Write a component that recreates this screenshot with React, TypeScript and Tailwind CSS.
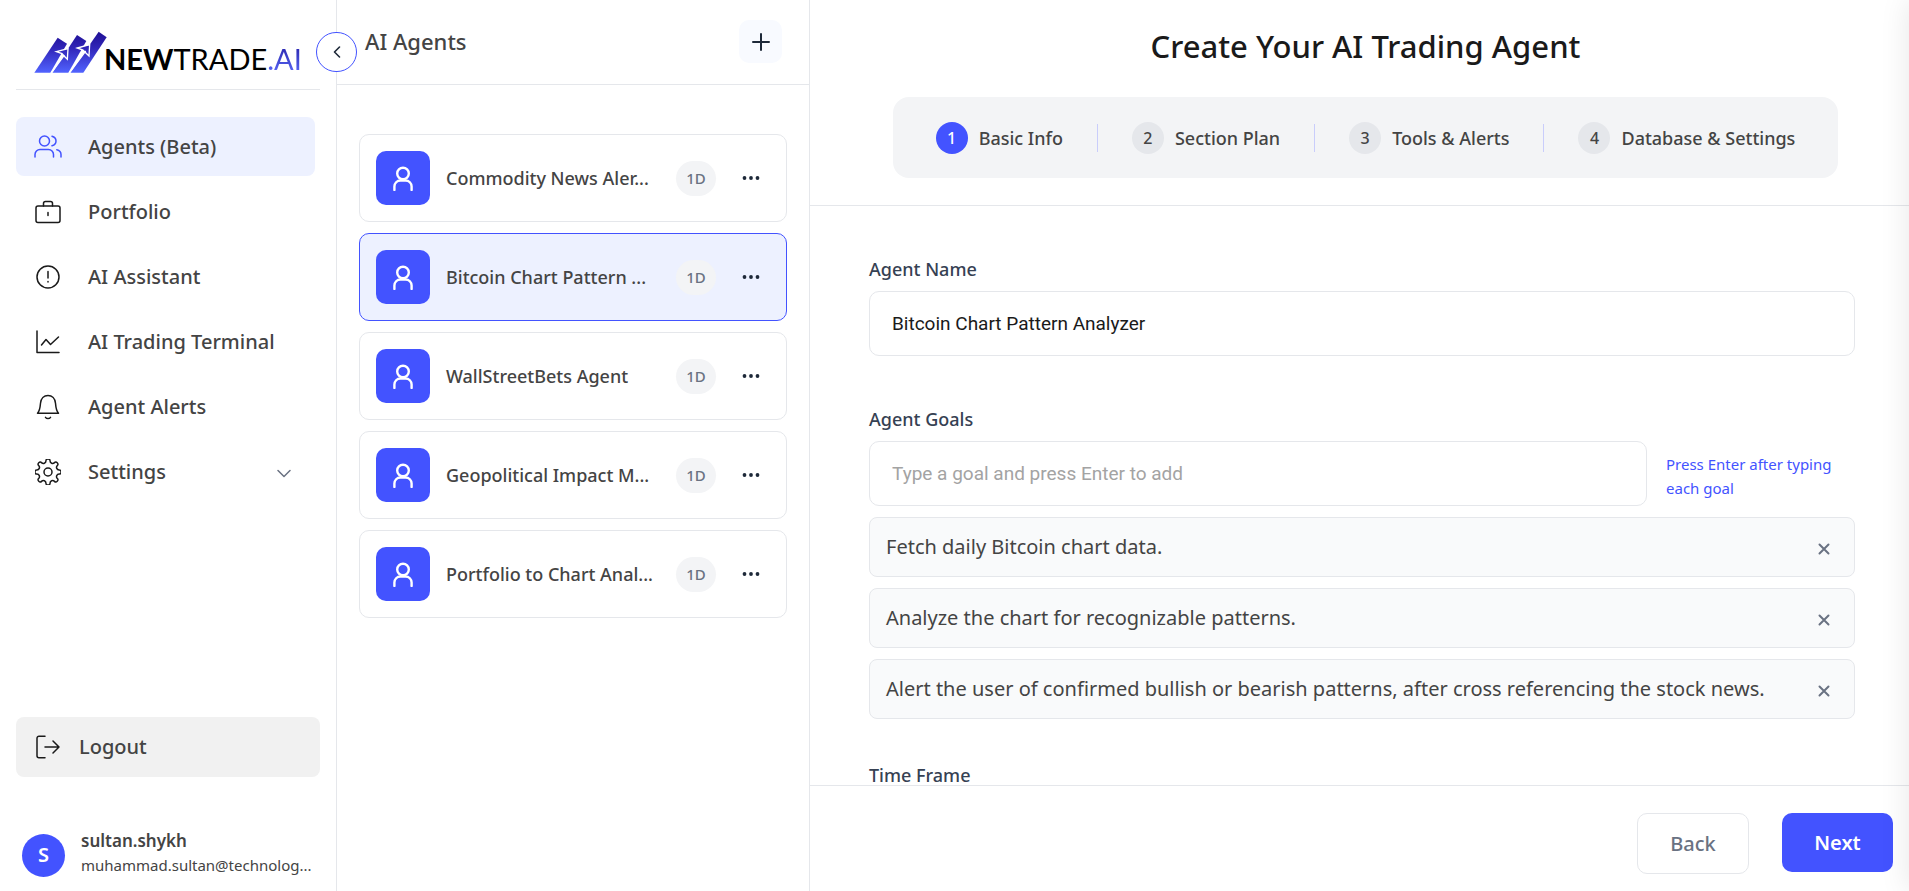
import { useState } from "react";
import type { ReactNode } from "react";

const TEETH = 8;

/** Smooth closed outline of a round-toothed gear centred on (13, 13). */
function gearPath(): string {
  const points: [number, number][] = [];
  for (let i = 0; i < TEETH; i++) {
    const base = (i * 360) / TEETH - 90;
    const corners: [number, number][] = [
      [13.2, -9],
      [13.2, 9],
      [9.6, 12],
      [9.6, 33],
    ];
    for (const [r, a] of corners) {
      const t = ((base + a) * Math.PI) / 180;
      points.push([13 + r * Math.cos(t), 13 + r * Math.sin(t)]);
    }
  }
  const mid = (a: [number, number], b: [number, number]) =>
    `${((a[0] + b[0]) / 2).toFixed(2)} ${((a[1] + b[1]) / 2).toFixed(2)}`;
  let d = `M${mid(points[points.length - 1], points[0])}`;
  points.forEach((p, i) => {
    d += `Q${p[0].toFixed(2)} ${p[1].toFixed(2)} ${mid(p, points[(i + 1) % points.length])}`;
  });
  return `${d}Z`;
}

function Icon({ w, h, className, children }: { w: number; h: number; className?: string; children: ReactNode }) {
  return (
    <svg
      width={w}
      height={h}
      viewBox={`0 0 ${w} ${h}`}
      fill="none"
      stroke="currentColor"
      strokeWidth="1.5"
      strokeLinecap="round"
      strokeLinejoin="round"
      className={className}
      aria-hidden="true"
    >
      {children}
    </svg>
  );
}

const UsersIcon = () => (
  <Icon w={28} h={23}>
    <circle cx="10.5" cy="6" r="5" />
    <path d="M18 1.2c2.4.7 4 2.4 4 4.8s-1.600 4.100-4 4.800M1 22v-2.500a5 5 0 0 1 5-5h8.500a5 5 0 0 1 5 5V22M22.800 14.700c2.600.6 4.200 2.300 4.200 4.800V22" />
  </Icon>
);
const BriefcaseIcon = () => (
  <Icon w={26} h={24}>
    <rect x="1" y="6" width="24" height="16.500" rx="2" />
    <path d="M8.500 6V3.500a2 2 0 0 1 2-2h5a2 2 0 0 1 2 2V6M13 12.500v3" />
  </Icon>
);
const AlertIcon = () => (
  <Icon w={24} h={24}>
    <circle cx="12" cy="12" r="11" />
    <path d="M12 6.500v6.500M12 16.500v.5" />
  </Icon>
);
const ChartIcon = () => (
  <Icon w={24} h={24}>
    <path d="M1 1v21.500h22M5.500 15l4.500-5.500 4.500 5L22.500 7" />
  </Icon>
);
const BellIcon = () => (
  <Icon w={24} h={26}>
    <path d="M1.500 19.300c2-2 2.600-5 3-10C4.900 4.500 8 1.500 12 1.500s7.100 3 7.500 7.800c.4 5 1 8 3 10zM9.500 23.300c.6.900 1.400 1.300 2.500 1.300s1.900-.4 2.500-1.300" />
  </Icon>
);
const GearIcon = () => (
  <Icon w={26} h={26}>
    <path d={gearPath()} />
    <circle cx="13" cy="13" r="4" />
  </Icon>
);
const LogoutIcon = () => (
  <Icon w={24} h={24}>
    <path d="M9 1.200H3a2 2 0 0 0-2 2v17.600a2 2 0 0 0 2 2h6M9 12h14M17 6l6 6-6 6" />
  </Icon>
);

const LogoMark = () => (
  <svg width="75" height="43" viewBox="8 5 225 129" className="shrink-0" aria-hidden="true">
    <defs>
      <linearGradient id="bars" x1="0" y1="10" x2="0" y2="133" gradientUnits="userSpaceOnUse">
        <stop offset="0" stopColor="#1f0f94" />
        <stop offset="0.400" stopColor="#3125b8" />
        <stop offset="1" stopColor="#5163ff" />
      </linearGradient>
    </defs>
    <g fill="url(#bars)">
      <path d="M12 133 82 28l28 18-50 87z" />
      <path d="M66 133 140 20l28 18-54 95z" />
      <path d="M120 133 205 10l24 17-70 106z" />
      <g stroke="#fff" strokeWidth="4">
        <path d="m78 70 35-9-2 32-9-9-7-8z" />
        <path d="m141 59 37-10-2 34-10-10-8-8z" />
        <path d="M63 134 102 80M117 134l49-66" strokeWidth="4" />
      </g>
    </g>
  </svg>
);

const navItems = [
  { label: "Agents (Beta)", icon: <UsersIcon />, active: true },
  { label: "Portfolio", icon: <BriefcaseIcon /> },
  { label: "AI Assistant", icon: <AlertIcon /> },
  { label: "AI Trading Terminal", icon: <ChartIcon /> },
  { label: "Agent Alerts", icon: <BellIcon /> },
  { label: "Settings", icon: <GearIcon />, expandable: true },
];

function Sidebar() {
  return (
    <aside className="relative z-10 flex w-[337px] shrink-0 flex-col border-r border-gray-200 px-4 pb-[10px]">
      <button
        type="button"
        aria-label="Collapse sidebar"
        className="absolute top-8 -right-[21px] flex h-10 w-[41px] items-center justify-center rounded-full border border-[#4353ff] bg-white text-gray-800"
      >
        <Icon w={8} h={12}>
          <path d="M6.500 1 1.500 6l5 5" strokeWidth="1.600" />
        </Icon>
      </button>

      <a href="#home" className="flex h-[90px] items-end border-b border-gray-200 pb-4 pl-[17px]">
        <LogoMark />
        <span className="-ml-1 font-[Lato] text-[29px] leading-7 whitespace-nowrap text-black">
          <span className="font-bold">NEW</span>TRADE
          <span className="bg-linear-to-b from-[#2413a0] to-[#5f6dff] bg-clip-text text-transparent">.AI</span>
        </span>
      </a>

      <nav className="mt-[27px] mr-[5px] flex flex-col gap-[6px]">
        {navItems.map((item) => (
          <a
            key={item.label}
            href="#nav"
            aria-current={item.active ? "page" : undefined}
            className={`flex h-[59px] items-center rounded-lg pr-6 pl-[18px] text-xl font-medium ${item.active ? "bg-[#edf1ff]" : ""}`}
          >
            <span className={`flex w-7 justify-center ${item.active ? "text-[#4353ff]" : "text-[#1a1a1a]"}`}>
              {item.icon}
            </span>
            <span className="ml-[26px] flex-1">{item.label}</span>
            {item.expandable && (
              <Icon w={14} h={9} className="mt-1 text-gray-500">
                <path d="m1 1.500 6 6 6-6" />
              </Icon>
            )}
          </a>
        ))}
      </nav>

      <button
        type="button"
        className="mt-auto flex h-[60px] shrink-0 items-center rounded-lg bg-[#f1f1f1] pl-5 text-xl font-medium"
      >
        <span className="text-[#1a1a1a]">
          <LogoutIcon />
        </span>
        <span className="ml-[19px]">Logout</span>
      </button>

      <div className="mt-[52px] flex items-center gap-4 pl-[6px]">
        <div className="flex size-[43px] shrink-0 items-center justify-center rounded-full bg-[#4353ff] text-xl font-semibold text-white">
          S
        </div>
        <div className="min-w-0 pb-1">
          <p className="text-[17px] leading-6 font-semibold">sultan.shykh</p>
          <p className="truncate text-[15px] leading-6">muhammad.sultan@technolog...</p>
        </div>
      </div>
    </aside>
  );
}

const agents = [
  "Commodity News Aler...",
  "Bitcoin Chart Pattern ...",
  "WallStreetBets Agent",
  "Geopolitical Impact M...",
  "Portfolio to Chart Anal...",
];

function AgentList() {
  const selected = 1;
  return (
    <section className="flex w-[473px] shrink-0 flex-col border-r border-gray-200">
      <header className="flex h-[85px] items-start justify-between border-b border-gray-200 pt-5 pr-[27px] pl-7">
        <h2 className="text-[22px] leading-[43px] font-medium">AI Agents</h2>
        <button
          type="button"
          aria-label="Add agent"
          className="flex size-[43px] items-center justify-center rounded-[10px] bg-[#f8faff] text-gray-800"
        >
          <Icon w={18} h={18}>
            <path d="M9 1v16M1 9h16" strokeWidth="2" />
          </Icon>
        </button>
      </header>
      <ul className="flex flex-col gap-[11px] pt-[49px] pr-[22px] pl-[22px]">
        {agents.map((name, i) => (
          <li
            key={name}
            className={`flex items-center rounded-[10px] border p-4 ${i === selected ? "border-[#4353ff] bg-[#edf1ff]" : "border-gray-200 bg-white"}`}
          >
            <div className="flex size-[54px] shrink-0 items-center justify-center rounded-[10px] bg-[#4353ff] text-white">
              <Icon w={20} h={25}>
                <g strokeWidth="2.400">
                  <circle cx="10" cy="7.500" r="5.800" />
                  <path d="M1.400 24v-3.500a6 6 0 0 1 6-6h5.200a6 6 0 0 1 6 6V24" />
                </g>
              </Icon>
            </div>
            <span className="ml-4 min-w-0 flex-1 text-lg font-medium whitespace-nowrap">{name}</span>
            <span className="flex h-[35px] w-10 items-center justify-center rounded-full bg-gray-100 text-[15px] font-medium text-gray-500">
              1D
            </span>
            <button type="button" aria-label="Agent options" className="ml-4 flex w-[38px] justify-center text-gray-800">
              <svg width="18" height="4" viewBox="0 0 18 4" fill="currentColor" aria-hidden="true">
                <circle cx="2.500" cy="2" r="1.900" />
                <circle cx="9" cy="2" r="1.900" />
                <circle cx="15.500" cy="2" r="1.900" />
              </svg>
            </button>
          </li>
        ))}
      </ul>
    </section>
  );
}

const steps = ["Basic Info", "Section Plan", "Tools & Alerts", "Database & Settings"];

function Stepper() {
  return (
    <ol className="flex h-[81px] items-center gap-[34px] rounded-2xl bg-gray-100 px-[43px]">
      {steps.map((label, i) => (
        <li key={label} className="flex items-center gap-[34px]">
          {i > 0 && <span className="h-7 w-px bg-[#c9cdfb]" />}
          <span className="flex items-center gap-[11px]">
            <span
              className={`flex size-8 items-center justify-center rounded-full text-base font-medium ${i === 0 ? "bg-[#4353ff] text-white" : "bg-gray-200"}`}
            >
              {i + 1}
            </span>
            <span className="text-lg font-medium">{label}</span>
          </span>
        </li>
      ))}
    </ol>
  );
}

function AgentForm() {
  const [name, setName] = useState("Bitcoin Chart Pattern Analyzer");
  const [draft, setDraft] = useState("");
  const [goals, setGoals] = useState([
    "Fetch daily Bitcoin chart data.",
    "Analyze the chart for recognizable patterns.",
    "Alert the user of confirmed bullish or bearish patterns, after cross referencing the stock news.",
  ]);

  return (
    <form
      onSubmit={(e) => e.preventDefault()}
      className="min-h-0 flex-1 overflow-hidden pt-[49px] pr-[54px] pl-[59px]"
    >
      <label htmlFor="agent-name" className="block text-lg leading-7 font-medium text-gray-700">
        Agent Name
      </label>
      <input
        id="agent-name"
        value={name}
        onChange={(e) => setName(e.target.value)}
        className="mt-2 block h-[65px] w-full rounded-[10px] border border-gray-200 px-[22px] font-[Roboto] text-[19px] text-[#1a1a1a]"
      />

      <label htmlFor="agent-goal" className="mt-[49px] block text-lg leading-7 font-medium text-gray-700">
        Agent Goals
      </label>
      <div className="mt-2 flex items-center gap-[19px]">
        <input
          id="agent-goal"
          value={draft}
          onChange={(e) => setDraft(e.target.value)}
          onKeyDown={(e) => {
            if (e.key === "Enter" && draft.trim()) {
              setGoals([...goals, draft.trim()]);
              setDraft("");
            }
          }}
          placeholder="Type a goal and press Enter to add"
          className="h-[65px] min-w-0 flex-1 rounded-[10px] border border-gray-200 px-[22px] font-[Roboto] text-[19px] text-[#1a1a1a] placeholder:text-[#a3a3a3]"
        />
        <p className="w-[189px] pt-1 text-[15px] leading-6 text-[#4353ff]">Press Enter after typing each goal</p>
      </div>

      <ul className="mt-[11px] flex flex-col gap-[11px]">
        {goals.map((goal) => (
          <li
            key={goal}
            className="flex h-[60px] items-center justify-between rounded-lg border border-gray-200 bg-gray-50 pr-6 pl-4"
          >
            <span className="text-xl">{goal}</span>
            <button
              type="button"
              aria-label="Remove goal"
              onClick={() => setGoals(goals.filter((g) => g !== goal))}
              className="mt-1 text-gray-500"
            >
              <Icon w={12} h={12}>
                <path d="m1.500 1.500 9 9M10.500 1.500l-9 9" strokeWidth="2" />
              </Icon>
            </button>
          </li>
        ))}
      </ul>

      <h3 className="mt-[46px] text-lg leading-5 font-medium text-gray-700">Time Frame</h3>
    </form>
  );
}

export default function App() {
  return (
    <div className="flex h-screen overflow-hidden bg-white font-['Noto_Sans',sans-serif] text-[#444]">
      <Sidebar />
      <AgentList />
      <main className="relative flex min-w-0 flex-1 flex-col overflow-hidden">
        <header className="flex h-[206px] shrink-0 flex-col items-center border-b border-gray-200 pt-[26px] pl-3">
          <h1 className="mb-[31px] text-[31px] leading-10 font-medium text-[#1a1a1a]">Create Your AI Trading Agent</h1>
          <Stepper />
        </header>
        <AgentForm />
        <footer className="flex h-[106px] shrink-0 items-start justify-end gap-[33px] border-t border-gray-200 pt-[27px] pr-4">
          <button
            type="button"
            className="h-[61px] w-28 rounded-[10px] border border-gray-200 text-xl font-medium text-gray-500"
          >
            Back
          </button>
          <button type="button" className="h-[59px] w-[111px] rounded-[10px] bg-[#4353ff] text-xl font-semibold text-white">
            Next
          </button>
        </footer>
        <div className="pointer-events-none absolute inset-y-0 left-full w-20 shadow-[0_0_30px_rgba(0,0,0,0.1)]" />
      </main>
    </div>
  );
}
